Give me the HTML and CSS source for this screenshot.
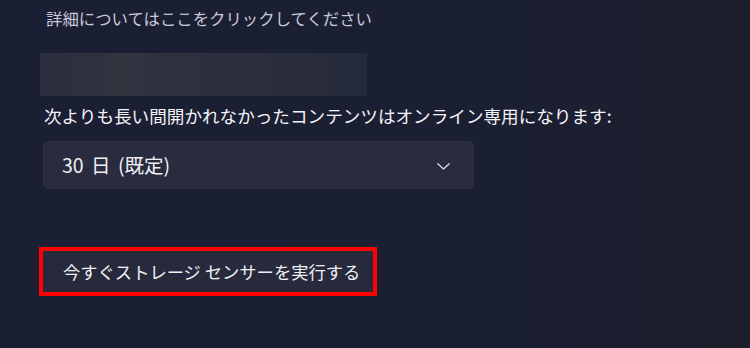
FILE: index.html
```html
<!DOCTYPE html>
<html lang="ja">
<head>
<meta charset="utf-8">
<link rel="stylesheet" href="styles.css">
</head>
<body>
<div class="page">
  <div class="help">詳細についてはここをクリックしてください</div>
  <div class="blur"></div>
  <div class="label">次よりも長い間開かれなかったコンテンツはオンライン専用になります:</div>
  <div class="select">
    <span class="select-text">30 日 (既定)</span>
    <svg class="chev" width="13" height="7" viewBox="0 0 13 7"><polyline points="0.8,0.8 6.5,6 12.2,0.8" fill="none" stroke="#d6d6e2" stroke-width="1.4" stroke-linecap="round" stroke-linejoin="round"/></svg>
  </div>
  <div class="run">
    <span class="run-text">今すぐストレージ センサーを実行する</span>
  </div>
</div>
</body>
</html>
```

FILE: styles.css
```css
html, body {
  margin: 0;
  padding: 0;
}
body {
  width: 750px;
  height: 348px;
  overflow: hidden;
  background: linear-gradient(90deg, #1b1f33 0%, #1b1f32 70%, #1c1f2e 90%, #1d1f2b 100%);
  font-family: "Noto Sans CJK JP", "Noto Sans", sans-serif;
  color: #f2f2f6;
}
.page {
  display: flex;
  flex-direction: column;
  align-items: flex-start;
  padding: 6px 0 0 40px;
}
.help {
  margin-left: 6px;
  font-size: 16.4px;
  line-height: 24px;
  color: #c9c9de;
}
.blur {
  margin-top: 23px;
  width: 327px;
  height: 43px;
  background: linear-gradient(90deg, #2a2e3e 0%, #30343f 25%, #2b2f3e 60%, #252a3a 100%);
}
.label {
  margin-top: 6px;
  margin-left: 4px;
  font-size: 17.6px;
  line-height: 28px;
  color: #f4f4f8;
  white-space: nowrap;
}
.select {
  margin-top: 11px;
  margin-left: 3px;
  width: 431px;
  height: 48px;
  box-sizing: border-box;
  border-radius: 5px;
  background: #282c3e;
  border: 1px solid #2c3042;
  display: flex;
  align-items: center;
  justify-content: space-between;
  padding: 0 23px 0 18px;
}
.select-text {
  font-size: 19.5px;
  line-height: 26px;
  word-spacing: 3px;
  color: #f0f0f4;
}
.chev {
  display: block;
  margin-top: 2px;
}
.run {
  margin-top: 58px;
  margin-left: -1px;
  box-sizing: border-box;
  width: 338px;
  height: 49px;
  border: 4px solid #ff0000;
  background: #262a3c;
  display: flex;
  align-items: center;
  padding-left: 20px;
}
.run-text {
  font-size: 17.3px;
  line-height: 24px;
  color: #f0f0f4;
  white-space: nowrap;
}
```
